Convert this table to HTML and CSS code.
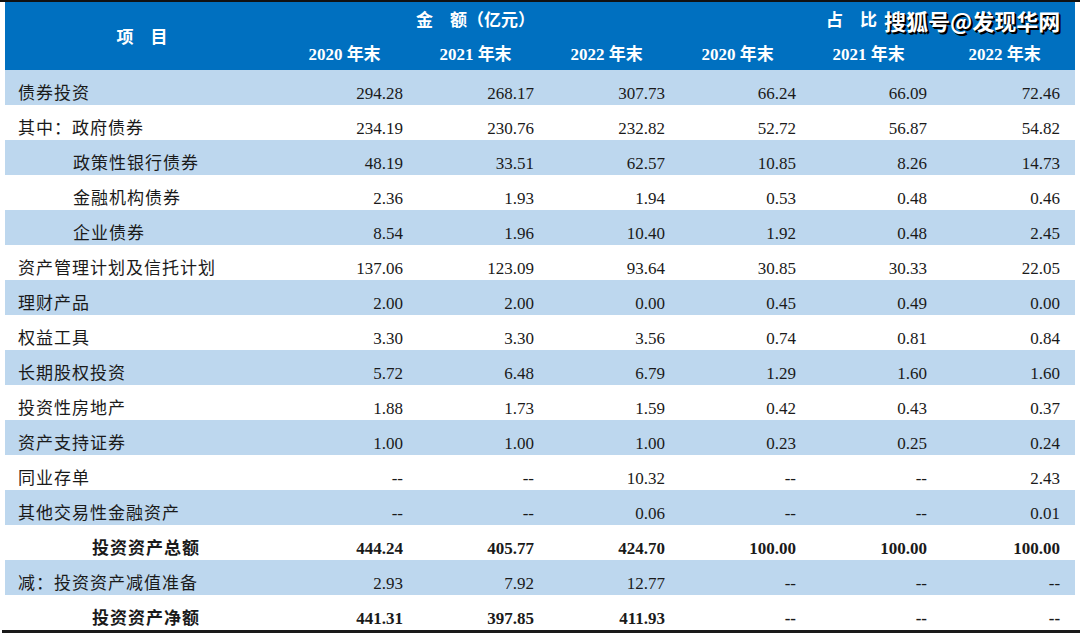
FILE: index.html
```html
<!DOCTYPE html>
<html lang="zh-CN">
<head>
<meta charset="utf-8">
<title>投资资产</title>
<link rel="stylesheet" href="styles.css">
</head>
<body>
<div class="page">
  <div class="topline"></div>
  <div class="tablewrap">
    <table class="grid">
      <colgroup>
        <col class="c-label"><col class="c-num"><col class="c-num"><col class="c-num"><col class="c-num"><col class="c-num"><col class="c-last">
      </colgroup>
      <thead>
        <tr class="h1">
          <th rowspan="2" class="h-item">项　目</th>
          <th colspan="3" class="h-group">金　额（亿元）</th>
          <th colspan="3" class="h-group h-ratio">占　比</th>
        </tr>
        <tr class="h2">
          <th>2020 年末</th><th>2021 年末</th><th>2022 年末</th>
          <th>2020 年末</th><th>2021 年末</th><th>2022 年末</th>
        </tr>
      </thead>
      <tbody>
        <tr class="alt"><td class="lbl">债券投资</td><td>294.28</td><td>268.17</td><td>307.73</td><td>66.24</td><td>66.09</td><td>72.46</td></tr>
        <tr><td class="lbl">其中：政府债券</td><td>234.19</td><td>230.76</td><td>232.82</td><td>52.72</td><td>56.87</td><td>54.82</td></tr>
        <tr class="alt"><td class="lbl sub">政策性银行债券</td><td>48.19</td><td>33.51</td><td>62.57</td><td>10.85</td><td>8.26</td><td>14.73</td></tr>
        <tr><td class="lbl sub">金融机构债券</td><td>2.36</td><td>1.93</td><td>1.94</td><td>0.53</td><td>0.48</td><td>0.46</td></tr>
        <tr class="alt"><td class="lbl sub">企业债券</td><td>8.54</td><td>1.96</td><td>10.40</td><td>1.92</td><td>0.48</td><td>2.45</td></tr>
        <tr><td class="lbl">资产管理计划及信托计划</td><td>137.06</td><td>123.09</td><td>93.64</td><td>30.85</td><td>30.33</td><td>22.05</td></tr>
        <tr class="alt"><td class="lbl">理财产品</td><td>2.00</td><td>2.00</td><td>0.00</td><td>0.45</td><td>0.49</td><td>0.00</td></tr>
        <tr><td class="lbl">权益工具</td><td>3.30</td><td>3.30</td><td>3.56</td><td>0.74</td><td>0.81</td><td>0.84</td></tr>
        <tr class="alt"><td class="lbl">长期股权投资</td><td>5.72</td><td>6.48</td><td>6.79</td><td>1.29</td><td>1.60</td><td>1.60</td></tr>
        <tr><td class="lbl">投资性房地产</td><td>1.88</td><td>1.73</td><td>1.59</td><td>0.42</td><td>0.43</td><td>0.37</td></tr>
        <tr class="alt"><td class="lbl">资产支持证券</td><td>1.00</td><td>1.00</td><td>1.00</td><td>0.23</td><td>0.25</td><td>0.24</td></tr>
        <tr><td class="lbl">同业存单</td><td>--</td><td>--</td><td>10.32</td><td>--</td><td>--</td><td>2.43</td></tr>
        <tr class="alt"><td class="lbl">其他交易性金融资产</td><td>--</td><td>--</td><td>0.06</td><td>--</td><td>--</td><td>0.01</td></tr>
        <tr class="total"><td class="lbl tot">投资资产总额</td><td>444.24</td><td>405.77</td><td>424.70</td><td>100.00</td><td>100.00</td><td>100.00</td></tr>
        <tr class="alt"><td class="lbl">减：投资资产减值准备</td><td>2.93</td><td>7.92</td><td>12.77</td><td>--</td><td>--</td><td>--</td></tr>
        <tr class="total"><td class="lbl tot">投资资产净额</td><td>441.31</td><td>397.85</td><td>411.93</td><td>--</td><td>--</td><td>--</td></tr>
      </tbody>
    </table>
    <div class="watermark">搜狐号@发现华网</div>
  </div>
  <div class="bottomline"></div>
</div>
</body>
</html>
```

FILE: styles.css
```css
html, body {
  margin: 0;
  padding: 0;
  background: #ffffff;
}

.page {
  width: 1080px;
  height: 635px;
  overflow: hidden;
  font-family: "Liberation Serif", "Noto Sans CJK SC", serif;
  color: #1a1a1a;
}

.topline {
  height: 2px;
  background: #111111;
}

.tablewrap {
  position: relative;
  margin-left: 5px;
  width: 1070px;
}

.grid {
  width: 1070px;
  border-collapse: collapse;
  table-layout: fixed;
  border-spacing: 0;
}

.c-label { width: 274px; }
.c-num { width: 131px; }
.c-last { width: 141px; }

thead th {
  background: #0070c0;
  color: #ffffff;
  font-weight: bold;
  font-size: 17px;
  height: 34px;
  box-sizing: border-box;
  padding: 4px 0 0 0;
  line-height: 30px;
  text-align: center;
  white-space: nowrap;
  vertical-align: top;
}

.h1 th.h-item {
  height: 68px;
  padding-top: 21px;
}

.h1 th.h-ratio {
  text-align: left;
  padding-left: 154px;
}

tbody td {
  height: 35px;
  box-sizing: border-box;
  padding: 12px 7px 0 0;
  line-height: 23px;
  font-size: 17px;
  text-align: right;
  white-space: nowrap;
  vertical-align: top;
}

tbody td:last-child {
  padding-right: 15px;
}

tbody tr.alt td {
  background: #bdd7ee;
}

tbody td.lbl {
  text-align: left;
  padding-left: 13px;
  letter-spacing: 1px;
}

tbody td.sub {
  padding-left: 68px;
}

tbody tr.total td {
  font-weight: bold;
}

tbody td.tot {
  padding-left: 87px;
}

.watermark {
  position: absolute;
  left: 879px;
  top: 5px;
  font-family: "Noto Sans CJK SC", "Noto Sans", sans-serif;
  font-weight: bold;
  font-size: 22px;
  line-height: 26px;
  color: #ffffff;
  text-shadow: 2px 2px 0 #000000, 1px 1px 0 #000000;
  white-space: nowrap;
}

.bottomline {
  margin-left: 2px;
  height: 3px;
  background: #1a1a1a;
}
```
